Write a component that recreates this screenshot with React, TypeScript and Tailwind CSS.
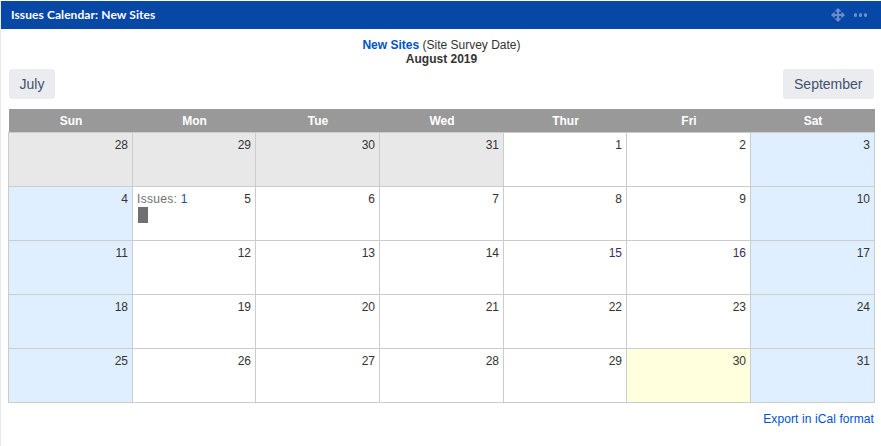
const headers = ['Sun', 'Mon', 'Tue', 'Wed', 'Thur', 'Fri', 'Sat'];

type Day = { n: number; kind?: 'out' | 'weekend' | 'today'; purple?: boolean; issues?: boolean };

const weeks: Day[][] = [
  [
    { n: 28, kind: 'out' },
    { n: 29, kind: 'out' },
    { n: 30, kind: 'out' },
    { n: 31, kind: 'out' },
    { n: 1 },
    { n: 2 },
    { n: 3, kind: 'weekend' },
  ],
  [
    { n: 4, kind: 'weekend' },
    { n: 5, issues: true },
    { n: 6 },
    { n: 7 },
    { n: 8 },
    { n: 9 },
    { n: 10, kind: 'weekend' },
  ],
  [
    { n: 11, kind: 'weekend' },
    { n: 12 },
    { n: 13 },
    { n: 14 },
    { n: 15, purple: true },
    { n: 16, purple: true },
    { n: 17, kind: 'weekend' },
  ],
  [
    { n: 18, kind: 'weekend' },
    { n: 19 },
    { n: 20 },
    { n: 21 },
    { n: 22 },
    { n: 23 },
    { n: 24, kind: 'weekend' },
  ],
  [
    { n: 25, kind: 'weekend' },
    { n: 26 },
    { n: 27 },
    { n: 28 },
    { n: 29 },
    { n: 30, kind: 'today' },
    { n: 31, kind: 'weekend' },
  ],
];

function cellBg(kind?: Day['kind']) {
  if (kind === 'out') return 'bg-[#e8e8e8]';
  if (kind === 'weekend') return 'bg-[#e0efff]';
  if (kind === 'today') return 'bg-[#ffffdd]';
  return 'bg-white';
}

function MoveIcon() {
  return (
    <svg width="14" height="14" viewBox="0 0 15 15" fill="#6a8ecb">
      <path d="M7.5 0 L10.5 3 V4 H8.7 V6.3 H11 V4.5 H12 L15 7.5 L12 10.5 H11 V8.7 H8.7 V11 H10.5 V12 L7.5 15 L4.5 12 V11 H6.3 V8.7 H4 V10.5 H3 L0 7.5 L3 4.5 H4 V6.3 H6.3 V4 H4.5 V3 Z" />
    </svg>
  );
}

export default function App() {
  return (
    <div className="h-[446px] w-[881px] overflow-hidden bg-white font-['Liberation_Sans',Arial,sans-serif] text-[12px] text-[#333333]">
      <div className="h-full border-l border-t border-l-[#e6e8ee] border-t-white">
        <div className="flex h-[28px] items-center justify-between bg-[#0747a6] pl-[10px] pr-[14px]">
          <span className="font-['Lato',sans-serif] text-[12px] font-bold tracking-[0.08px] text-white">Issues Calendar: New Sites</span>
          <div className="flex items-center gap-[8.5px]">
            <MoveIcon />
            <div className="flex gap-[1.5px]">
              <span className="h-[3.5px] w-[3.5px] rounded-full bg-[#6a8ecb]" />
              <span className="h-[3.5px] w-[3.5px] rounded-full bg-[#6a8ecb]" />
              <span className="h-[3.5px] w-[3.5px] rounded-full bg-[#6a8ecb]" />
            </div>
          </div>
        </div>

        <div className="pl-[7px] pr-[6px]">
          <div className="grid h-[80px] grid-cols-[1fr_auto_1fr] items-start pl-px pr-px">
            <div>
              <button className="mt-[40px] h-[30px] rounded-[3px] bg-[#ebecf0] px-[10.5px] text-[14px] text-[#42526e]">July</button>
            </div>
            <div className="mt-[9px] text-center leading-[14px]">
              <div>
                <span className="font-bold text-[#0052cc]">New Sites</span> (Site Survey Date)
              </div>
              <div className="font-bold">August 2019</div>
            </div>
            <div className="text-right">
              <button className="mt-[40px] h-[30px] rounded-[3px] bg-[#ebecf0] px-[11.5px] text-[14px] text-[#42526e]">September</button>
            </div>
          </div>

          <table className="w-[866px] table-fixed border-collapse">
            <colgroup>
              <col className="w-[124px]" />
              <col className="w-[123px]" />
              <col className="w-[124px]" />
              <col className="w-[124px]" />
              <col className="w-[123px]" />
              <col className="w-[124px]" />
              <col className="w-[124px]" />
            </colgroup>
            <thead>
              <tr className="h-[23px] bg-[#999999] text-white">
                {headers.map((h) => (
                  <th key={h} className="p-0 pl-px pt-px text-center text-[12px] font-bold">
                    {h}
                  </th>
                ))}
              </tr>
            </thead>
            <tbody>
              {weeks.map((week) => (
                <tr key={week[0].n} className="h-[54px]">
                  {week.map((d) => (
                    <td key={d.n} className={`border border-[#cccccc] px-[4px] pt-[5px] pb-0 align-top ${cellBg(d.kind)}`}>
                      <div className="flex h-[48px] items-start justify-between leading-[14px]">
                        {d.issues ? (
                          <div>
                            <div className="tracking-[0.3px] text-[#707070]">
                              Issues: <span className="text-[#1f4f9c]">1</span>
                            </div>
                            <div className="ml-px mt-px h-[16px] w-[10px] bg-[#707070]" />
                          </div>
                        ) : (
                          <span />
                        )}
                        <span className={d.purple ? 'text-[#3f2d5c]' : ''}>{d.n}</span>
                      </div>
                    </td>
                  ))}
                </tr>
              ))}
            </tbody>
          </table>

          <div className="mt-[9px] pr-px text-right leading-[14px] tracking-[0.1px] text-[#0052cc]">Export in iCal format</div>
        </div>
      </div>
    </div>
  );
}
